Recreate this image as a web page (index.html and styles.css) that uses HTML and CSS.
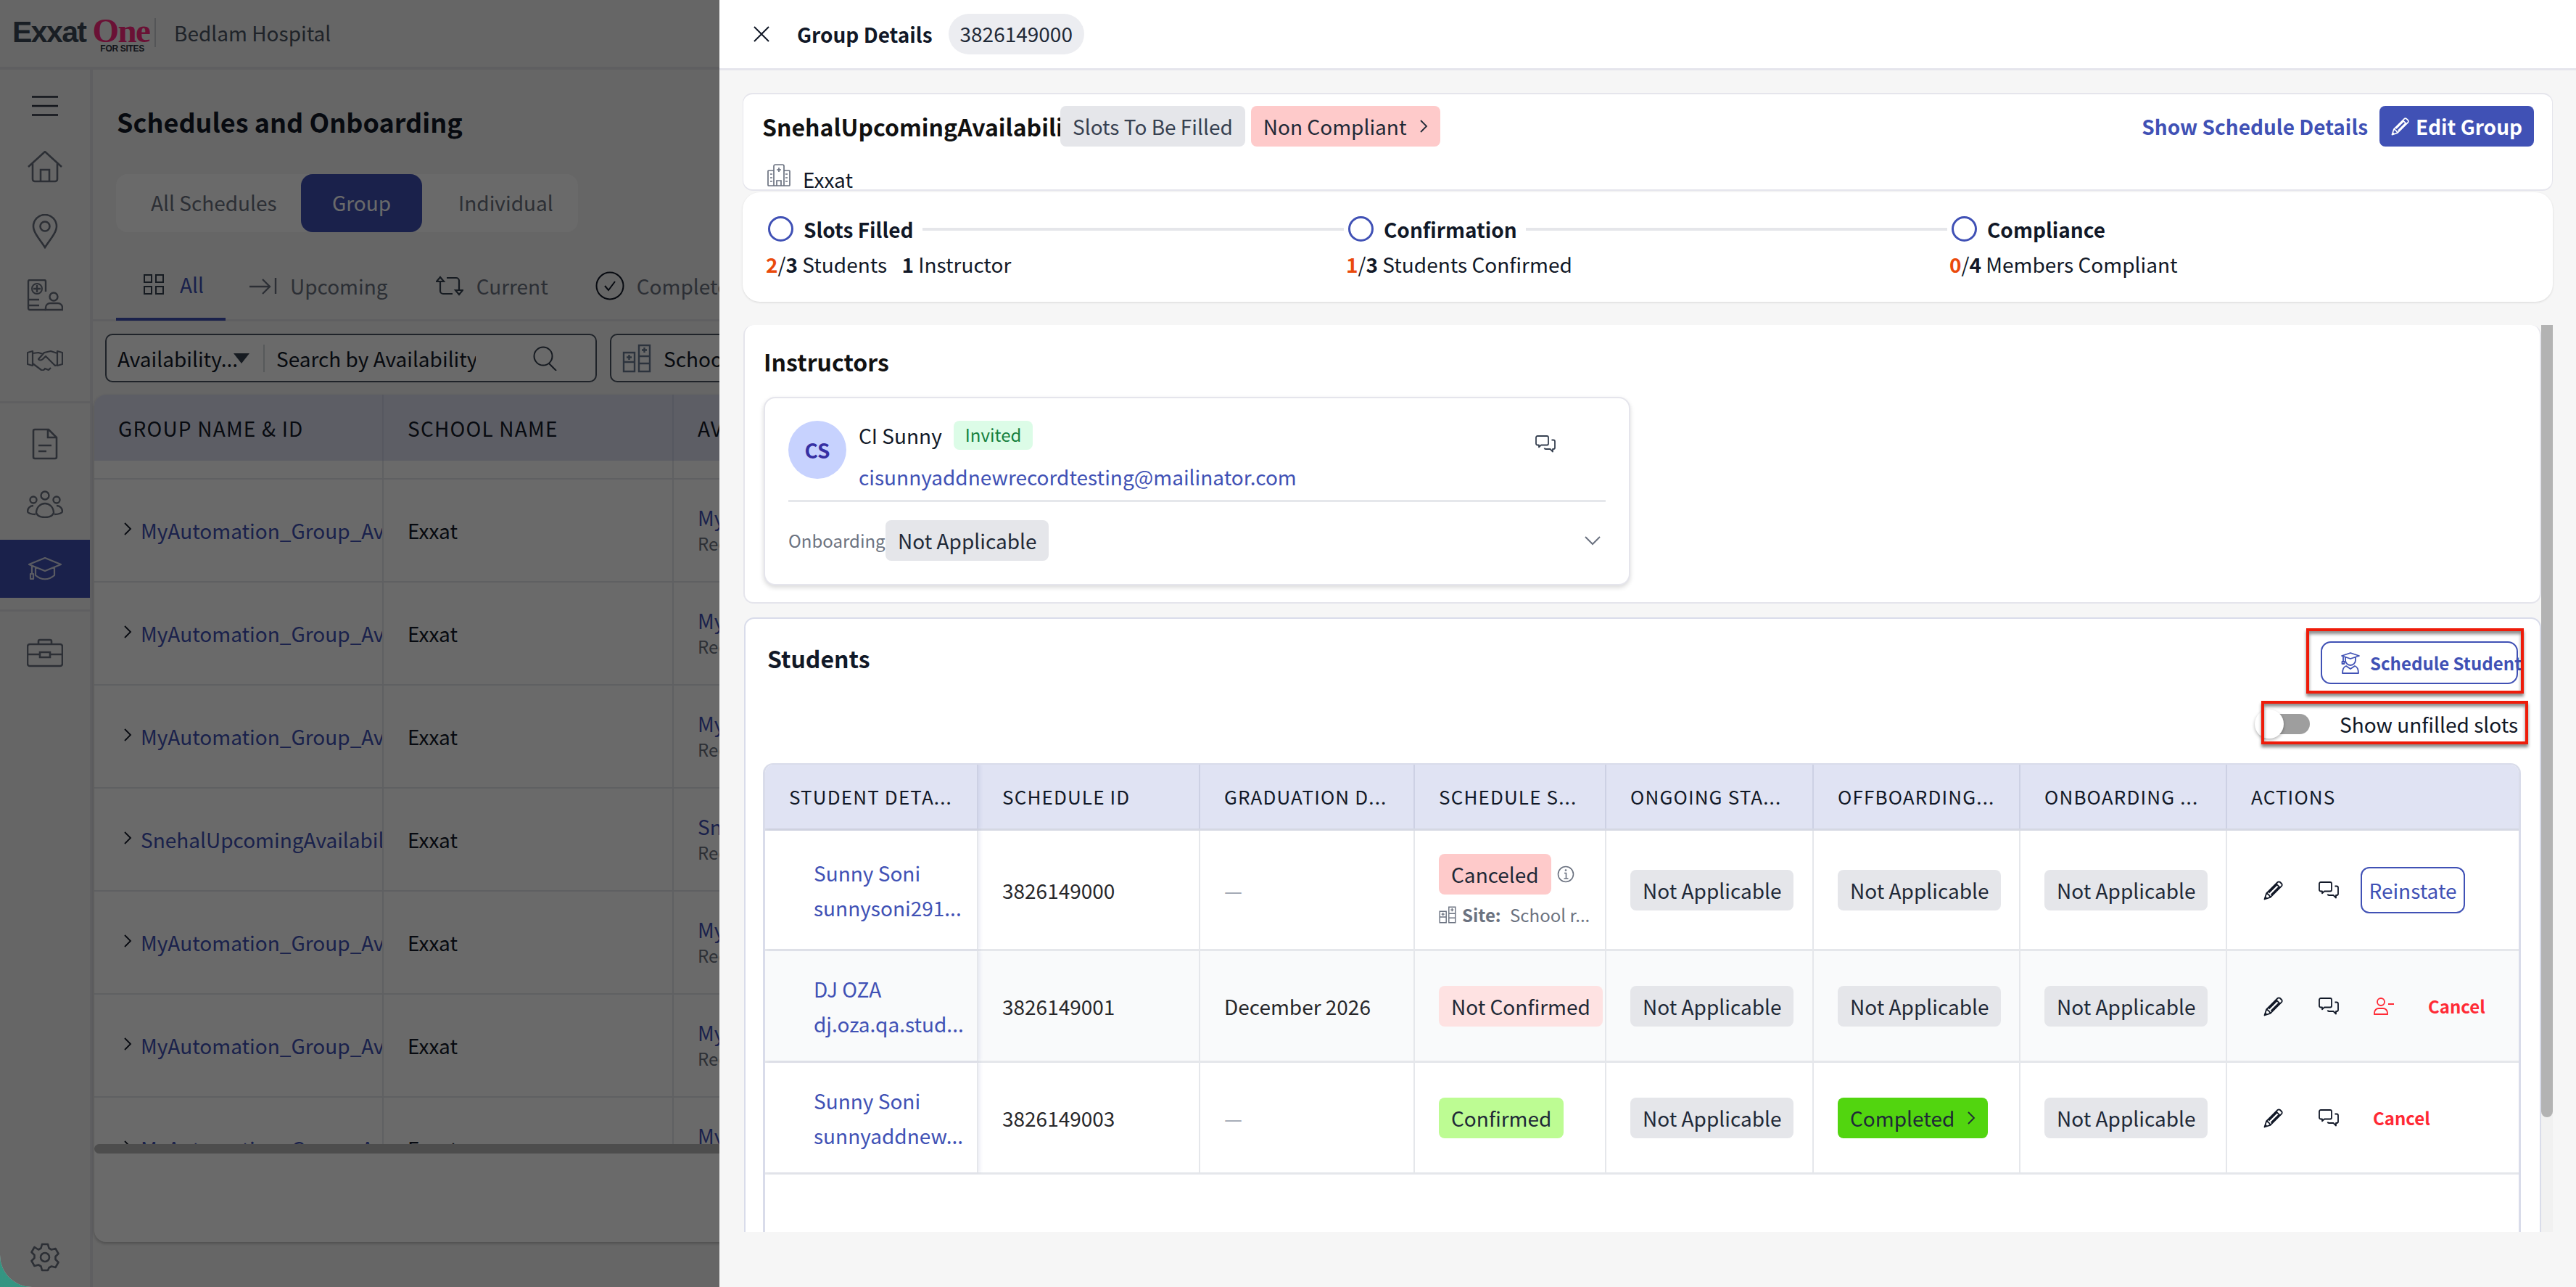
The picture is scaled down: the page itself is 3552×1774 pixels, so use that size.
FILE: index.html
```html
<!DOCTYPE html>
<html lang="en">
<head>
<meta charset="utf-8">
<title>Group Details</title>
<link rel="stylesheet" href="styles.css">
</head>
<body>
<svg class="defs" width="0" height="0" aria-hidden="true">
  <symbol id="i-pencil" viewBox="0 0 28 28"><path d="M1.5 26.5l2.6-8L19.6 3a2.4 2.4 0 013.4 0l2 2a2.4 2.4 0 010 3.4L9.5 23.9z M4.1 18.5c2 .4 4.800 3 5.400 5.400 M17.500 5.200l5.300 5.300 M7.500 17.500l11.500-11.500 M10.500 20.500l11-11" fill="none" stroke="currentColor" stroke-width="1.800" stroke-linejoin="round"/><path d="M1.500 26.500l1.300-4 2.700 2.700z" fill="currentColor"/></symbol>
  <symbol id="i-chat" viewBox="0 0 28 24"><path d="M3 1h13a2 2 0 012 2v8.500a2 2 0 01-2 2H8l-3 2.800v-2.800H3a2 2 0 01-2-2V3a2 2 0 012-2z M22.500 6.500H25a2 2 0 012 2V17a2 2 0 01-2 2h-1v3.500L20.500 19h-6a2 2 0 01-2-1.500" fill="none" stroke="currentColor" stroke-width="1.800" stroke-linejoin="round"/></symbol>
  <symbol id="i-unassign" viewBox="0 0 28 24"><circle cx="10" cy="6" r="5" fill="none" stroke="currentColor" stroke-width="1.800"/><path d="M1 23v-2a6 6 0 016-6h6a6 6 0 016 6v2z M20 9h8" fill="none" stroke="currentColor" stroke-width="1.800"/></symbol>
  <symbol id="i-chev" viewBox="0 0 12 20"><path d="M2 2l8 8-8 8" fill="none" stroke="currentColor" stroke-width="1.800"/></symbol>
  <symbol id="i-school" viewBox="0 0 40 40"><path d="M2 12h15v26H2z M23 2h15v36H23z M2 25h15 M23 17h15 M23 27h15 M9.500 15v7 M6 18.500h7 M30.500 5v7 M27 8.500h7" fill="none" stroke="currentColor" stroke-width="2.400"/></symbol>
  <symbol id="i-hospital" viewBox="0 0 32 32"><path d="M9 30V3a2 2 0 012-2h10a2 2 0 012 2v27 M9 9H2a1 1 0 00-1 1v19a1 1 0 001 1h28a1 1 0 001-1V10a1 1 0 00-1-1h-7 M13 30v-7h6v7 M16 5v6 M13 8h6 M4 14h3 M4 19h3 M4 24h3 M25 14h3 M25 19h3 M25 24h3" fill="none" stroke="currentColor" stroke-width="1.700"/></symbol>
</svg>

<div class="app">
  <div class="page">
    <header class="topbar">
      <div class="logo">
        <span class="logo-exxat">Exxat</span><span class="logo-one">One</span>
        <span class="logo-sites">FOR SITES</span>
      </div>
      <span class="logo-rule"></span>
      <span class="hospital">Bedlam Hospital</span>
    </header>
    <div class="shell">
      <nav class="sidebar">
        <div class="nav-item nav-menu"><svg width="36" height="28" viewBox="0 0 36 28"><path d="M0 1.500h36 M0 14h36 M0 26.500h36" stroke="currentColor" stroke-width="2.400"/></svg></div>
        <div class="nav-item nav-home"><svg width="50" height="44" viewBox="0 0 50 44"><path d="M2 22L25 1l23 21 M8 17v22a3 3 0 003 3h28a3 3 0 003-3V17 M19 42V26h12v16" fill="none" stroke="currentColor" stroke-width="2.600"/></svg></div>
        <div class="nav-item nav-pin"><svg width="36" height="48" viewBox="0 0 36 48"><path d="M18 46C10 34 2 25 2 17a16 16 0 0132 0c0 8-8 17-16 29z" fill="none" stroke="currentColor" stroke-width="2.600"/><circle cx="18" cy="17" r="6.500" fill="none" stroke="currentColor" stroke-width="2.600"/></svg></div>
        <div class="nav-item nav-clin"><svg width="50" height="44" viewBox="0 0 50 44"><path d="M26 42H4a2 2 0 01-2-2V3a2 2 0 012-2h20a2 2 0 012 2v14 M2 28h15 M2 36h15 M14 8v10 M9 13h10" fill="none" stroke="currentColor" stroke-width="2.400"/><circle cx="14" cy="13" r="7" fill="none" stroke="currentColor" stroke-width="2"/><circle cx="37" cy="24" r="5.500" fill="none" stroke="currentColor" stroke-width="2.400"/><path d="M26 42v-3a6 6 0 016-6h11a6 6 0 016 6v3z" fill="none" stroke="currentColor" stroke-width="2.400"/></svg></div>
        <div class="nav-item nav-hand"><svg width="50" height="30" viewBox="0 0 50 30"><path d="M8 3L1 5v16l7 2z M42 3l7 2v16l-7 2z M8 6l8-1 6 2 M42 6l-9-3-9 2-8 9c1 2 4 2 6 0l4-4 13 13 3-1V6 M8 20l12 9c2 1 4 0 5-2l5 2 3-3" fill="none" stroke="currentColor" stroke-width="2.200" stroke-linejoin="round"/></svg></div>
        <div class="nav-sep"></div>
        <div class="nav-item nav-doc"><svg width="36" height="44" viewBox="0 0 36 44"><path d="M2 4a2 2 0 012-2h19l11 11v27a2 2 0 01-2 2H4a2 2 0 01-2-2z M22 2v11h12 M9 24h18 M9 32h11" fill="none" stroke="currentColor" stroke-width="2.600"/></svg></div>
        <div class="nav-item nav-people"><svg width="50" height="38" viewBox="0 0 50 38"><circle cx="25" cy="7" r="5.500" fill="none" stroke="currentColor" stroke-width="2.400"/><circle cx="9" cy="13" r="4.500" fill="none" stroke="currentColor" stroke-width="2.400"/><circle cx="41" cy="13" r="4.500" fill="none" stroke="currentColor" stroke-width="2.400"/><path d="M13 31c0-8 6-13 12-13s12 5 12 13c-3 8-21 8-24 0z M9 21c-5 0-8 4-8 8 0 2 5 4 11 4 M41 21c5 0 8 4 8 8 0 2-5 4-11 4" fill="none" stroke="currentColor" stroke-width="2.400"/></svg></div>
        <div class="nav-item nav-active"><svg width="46" height="32" viewBox="0 0 46 32"><path d="M23 1L1 10l22 9 22-9z M10 14v11c8 7 18 7 26 0V14 M5 12v11 M3 23h4v7H3z" fill="none" stroke="currentColor" stroke-width="2.200" stroke-linejoin="round"/></svg></div>
        <div class="nav-sep nav-sep2"></div>
        <div class="nav-item nav-bag"><svg width="50" height="40" viewBox="0 0 50 40"><path d="M4 8h42a3 3 0 013 3v24a3 3 0 01-3 3H4a3 3 0 01-3-3V11a3 3 0 013-3z M16 8V4a2 2 0 012-2h14a2 2 0 012 2v4 M1 22h17 M32 22h17 M18 19h14v7H18z" fill="none" stroke="currentColor" stroke-width="2.600"/></svg></div>
        <div class="nav-item nav-gear"><svg width="40" height="40" viewBox="0 0 40 40"><path d="M16 2h8l1.500 5.500 3.500 2 5.500-1.500 4 7-4 4v4l4 4-4 7-5.500-1.500-3.500 2L24 38h-8l-1.500-5.500-3.500-2-5.500 1.500-4-7 4-4v-4l-4-4 4-7L11 9.500l3.500-2z" fill="none" stroke="currentColor" stroke-width="2.600" stroke-linejoin="round"/><circle cx="20" cy="20" r="6" fill="none" stroke="currentColor" stroke-width="2.600"/></svg></div>
      </nav>
      <main class="main">
        <h1 class="page-title">Schedules and Onboarding</h1>
        <div class="segments">
          <span class="seg seg-a">All Schedules</span>
          <span class="seg seg-b">Group</span>
          <span class="seg seg-c">Individual</span>
        </div>
        <div class="tabs">
          <div class="tab tab-all"><svg width="28" height="28" viewBox="0 0 28 28"><path d="M1 1h10v10H1z M17 1h10v10H17z M1 17h10v10H1z M17 17h10v10H17z" fill="none" stroke="currentColor" stroke-width="2"/></svg><span>All</span></div>
          <div class="tab tab-up"><svg width="38" height="24" viewBox="0 0 38 24"><path d="M0 13h28 M18 3l10 10-10 10 M36 1v22" fill="none" stroke="currentColor" stroke-width="2.400"/></svg><span>Upcoming</span></div>
          <div class="tab tab-cur"><svg width="38" height="28" viewBox="0 0 38 28"><path d="M6 7v14a4 4 0 004 4h13 M32 21V7a4 4 0 00-4-4H15 M1 8l5-6 5 6z M27 20l5 6 5-6z" fill="none" stroke="currentColor" stroke-width="2.200"/></svg><span>Current</span></div>
          <div class="tab tab-done"><svg width="40" height="40" viewBox="0 0 40 40"><circle cx="20" cy="20" r="18.500" fill="none" stroke="currentColor" stroke-width="2"/><path d="M13 20l5 6 9-12" fill="none" stroke="currentColor" stroke-width="2"/></svg><span>Completed</span></div>
        </div>
        <div class="filters">
          <div class="filter-box">
            <span class="filter-select">Availability...</span>
            <svg class="caret" width="22" height="14" viewBox="0 0 22 14"><path d="M0 0h22L11 14z" fill="currentColor"/></svg>
            <span class="filter-rule"></span>
            <span class="filter-input">Search by Availability Name</span>
            <svg class="search" width="34" height="34" viewBox="0 0 34 34"><circle cx="14" cy="14" r="12.500" fill="none" stroke="currentColor" stroke-width="2"/><path d="M22 24l10 10" stroke="currentColor" stroke-width="2"/></svg>
          </div>
          <div class="filter-school">
            <svg width="40" height="40"><use href="#i-school"/></svg>
            <span>School</span>
          </div>
        </div>
        <section class="grid-card">
          <div class="g-head">
            <div class="g-cell">GROUP NAME &amp; ID</div>
            <div class="g-cell">SCHOOL NAME</div>
            <div class="g-cell">AVAILABILITY</div>
          </div>
          <div class="g-body">
            <div class="g-row g-stub"><div class="g-cell"></div><div class="g-cell"></div><div class="g-cell"></div></div>
            <div class="g-row"><div class="g-cell g-name"><svg width="12" height="20"><use href="#i-chev"/></svg><span>MyAutomation_Group_Availability</span></div><div class="g-cell">Exxat</div><div class="g-cell g-av"><span class="g-link">MyAutomation</span><span class="g-rec">Recurring</span></div></div>
            <div class="g-row"><div class="g-cell g-name"><svg width="12" height="20"><use href="#i-chev"/></svg><span>MyAutomation_Group_Availability</span></div><div class="g-cell">Exxat</div><div class="g-cell g-av"><span class="g-link">MyAutomation</span><span class="g-rec">Recurring</span></div></div>
            <div class="g-row"><div class="g-cell g-name"><svg width="12" height="20"><use href="#i-chev"/></svg><span>MyAutomation_Group_Availability</span></div><div class="g-cell">Exxat</div><div class="g-cell g-av"><span class="g-link">MyAutomation</span><span class="g-rec">Recurring</span></div></div>
            <div class="g-row"><div class="g-cell g-name"><svg width="12" height="20"><use href="#i-chev"/></svg><span>SnehalUpcomingAvailability_Group</span></div><div class="g-cell">Exxat</div><div class="g-cell g-av"><span class="g-link">Snehal</span><span class="g-rec">Recurring</span></div></div>
            <div class="g-row"><div class="g-cell g-name"><svg width="12" height="20"><use href="#i-chev"/></svg><span>MyAutomation_Group_Availability</span></div><div class="g-cell">Exxat</div><div class="g-cell g-av"><span class="g-link">MyAutomation</span><span class="g-rec">Recurring</span></div></div>
            <div class="g-row"><div class="g-cell g-name"><svg width="12" height="20"><use href="#i-chev"/></svg><span>MyAutomation_Group_Availability</span></div><div class="g-cell">Exxat</div><div class="g-cell g-av"><span class="g-link">MyAutomation</span><span class="g-rec">Recurring</span></div></div>
            <div class="g-row"><div class="g-cell g-name"><svg width="12" height="20"><use href="#i-chev"/></svg><span>MyAutomation_Group_Availability</span></div><div class="g-cell">Exxat</div><div class="g-cell g-av"><span class="g-link">MyAutomation</span><span class="g-rec">Recurring</span></div></div>
          </div>
          <div class="g-scroll"></div>
        </section>
      </main>
    </div>
  </div>
  <div class="scrim"></div>

  <aside class="drawer">
    <header class="d-head">
      <svg class="d-close" width="22" height="22" viewBox="0 0 22 22"><path d="M1 1l20 20 M21 1L1 21" stroke="currentColor" stroke-width="2"/></svg>
      <span class="d-title">Group Details</span>
      <span class="d-id">3826149000</span>
    </header>
    <section class="summary">
      <div class="summary-main">
        <div class="summary-left">
          <span class="summary-name">SnehalUpcomingAvailabilit...</span>
          <span class="pill pill-grey pill-slots">Slots To Be Filled</span>
          <span class="pill pill-red">Non Compliant<svg class="pill-chev" width="12" height="20"><use href="#i-chev"/></svg></span>
        </div>
        <div class="summary-right">
          <span class="link-strong">Show Schedule Details</span>
          <span class="btn-primary"><svg width="26" height="26"><use href="#i-pencil"/></svg>Edit Group</span>
        </div>
      </div>
      <div class="summary-site"><svg width="32" height="32"><use href="#i-hospital"/></svg><span>Exxat</span></div>
    </section>
    <section class="steps">
      <div class="step step-a">
        <div class="step-top"><span class="step-dot"></span><span class="step-name">Slots Filled</span><span class="step-line"></span></div>
        <div class="step-sub"><b class="warn">2</b>/<b>3</b> Students <span class="gap"></span><b>1</b> Instructor</div>
      </div>
      <div class="step step-b">
        <div class="step-top"><span class="step-dot"></span><span class="step-name">Confirmation</span><span class="step-line"></span></div>
        <div class="step-sub"><b class="warn">1</b>/<b>3</b> Students Confirmed</div>
      </div>
      <div class="step step-c">
        <div class="step-top"><span class="step-dot"></span><span class="step-name">Compliance</span></div>
        <div class="step-sub"><b class="warn">0</b>/<b>4</b> Members Compliant</div>
      </div>
    </section>

    <div class="scroller">
      <div class="scroll-content">
        <section class="panel-ins">
          <h2 class="h-ins">Instructors</h2>
          <div class="ins-card">
            <div class="ins-top">
              <span class="avatar">CS</span>
              <div class="ins-info">
                <div class="ins-line"><span class="ins-name">CI Sunny</span><span class="invited">Invited</span></div>
                <span class="ins-mail">cisunnyaddnewrecordtesting@mailinator.com</span>
              </div>
              <svg class="ins-chat" width="28" height="24"><use href="#i-chat"/></svg>
            </div>
            <div class="ins-bottom">
              <span class="ob-label">Onboarding:</span>
              <span class="pill pill-grey">Not Applicable</span>
              <svg class="ins-down" width="24" height="14" viewBox="0 0 24 14"><path d="M2 2l10 10L22 2" fill="none" stroke="currentColor" stroke-width="2"/></svg>
            </div>
          </div>
        </section>

        <section class="panel-stu">
          <div class="stu-head">
            <h2 class="h-stu">Students</h2>
            <span class="btn-outline">
              <svg width="26" height="30" viewBox="0 0 26 30"><path d="M13 1L1 5l12 4 12-4z M6 7v4a7 7 0 0014 0V7 M3 6v7 M1.500 13h3v3h-3z M2 29c0-6 2-9 5-10l6 4 6-4c3 1 5 4 5 10z" fill="none" stroke="currentColor" stroke-width="1.800" stroke-linejoin="round"/></svg>
              Schedule Student
            </span>
          </div>
          <div class="stu-toggle">
            <span class="switch"><span class="switch-thumb"></span></span>
            <span class="switch-label">Show unfilled slots</span>
          </div>
          <div class="annot annot-a"></div>
          <div class="annot annot-b"></div>

          <div class="table">
            <div class="t-row t-head">
              <div class="t-cell c-first">STUDENT DETA...</div>
              <div class="t-cell">SCHEDULE ID</div>
              <div class="t-cell">GRADUATION D...</div>
              <div class="t-cell">SCHEDULE S...</div>
              <div class="t-cell">ONGOING STA...</div>
              <div class="t-cell">OFFBOARDING...</div>
              <div class="t-cell">ONBOARDING ...</div>
              <div class="t-cell">ACTIONS</div>
            </div>

            <div class="t-row t-r1">
              <div class="t-cell c-stu c-first"><span>Sunny Soni</span><span>sunnysoni291...</span></div>
              <div class="t-cell">3826149000</div>
              <div class="t-cell dash">—</div>
              <div class="t-cell c-status">
                <div class="status-top"><span class="pill pill-red">Canceled</span>
                  <svg class="info" width="24" height="24" viewBox="0 0 24 24"><circle cx="12" cy="12" r="10.500" fill="none" stroke="currentColor" stroke-width="1.600"/><path d="M10 10.500h2.500V18 M9.500 18h6" fill="none" stroke="currentColor" stroke-width="1.600"/><circle cx="12" cy="6.500" r="1.300" fill="currentColor"/></svg>
                </div>
                <div class="site-line"><svg width="24" height="24"><use href="#i-school"/></svg><b>Site:</b> School r...</div>
              </div>
              <div class="t-cell"><span class="pill pill-grey">Not Applicable</span></div>
              <div class="t-cell"><span class="pill pill-grey">Not Applicable</span></div>
              <div class="t-cell"><span class="pill pill-grey">Not Applicable</span></div>
              <div class="t-cell c-act">
                <svg class="act-pen" width="28" height="28"><use href="#i-pencil"/></svg>
                <svg class="act-chat" width="28" height="24"><use href="#i-chat"/></svg>
                <span class="reinstate">Reinstate</span>
              </div>
            </div>

            <div class="t-row t-r2">
              <div class="t-cell c-stu c-first"><span>DJ OZA</span><span>dj.oza.qa.stud...</span></div>
              <div class="t-cell">3826149001</div>
              <div class="t-cell">December 2026</div>
              <div class="t-cell"><span class="pill pill-rose">Not Confirmed</span></div>
              <div class="t-cell"><span class="pill pill-grey">Not Applicable</span></div>
              <div class="t-cell"><span class="pill pill-grey">Not Applicable</span></div>
              <div class="t-cell"><span class="pill pill-grey">Not Applicable</span></div>
              <div class="t-cell c-act">
                <svg class="act-pen" width="28" height="28"><use href="#i-pencil"/></svg>
                <svg class="act-chat" width="28" height="24"><use href="#i-chat"/></svg>
                <svg class="act-user" width="28" height="24"><use href="#i-unassign"/></svg>
                <span class="cancel">Cancel</span>
              </div>
            </div>

            <div class="t-row t-r3">
              <div class="t-cell c-stu c-first"><span>Sunny Soni</span><span>sunnyaddnew...</span></div>
              <div class="t-cell">3826149003</div>
              <div class="t-cell dash">—</div>
              <div class="t-cell"><span class="pill pill-lime">Confirmed</span></div>
              <div class="t-cell"><span class="pill pill-grey">Not Applicable</span></div>
              <div class="t-cell"><span class="pill pill-green">Completed<svg class="pill-chev" width="12" height="20"><use href="#i-chev"/></svg></span></div>
              <div class="t-cell"><span class="pill pill-grey">Not Applicable</span></div>
              <div class="t-cell c-act">
                <svg class="act-pen" width="28" height="28"><use href="#i-pencil"/></svg>
                <svg class="act-chat" width="28" height="24"><use href="#i-chat"/></svg>
                <span class="cancel">Cancel</span>
              </div>
            </div>
          </div>
        </section>
      </div>
      <div class="scroll-track"><div class="scroll-thumb"></div></div>
    </div>
  </aside>
</div>
</body>
</html>
```

FILE: styles.css
```css
* { box-sizing: border-box; }
html, body { margin: 0; padding: 0; }
body {
  width: 3552px;
  height: 1774px;
  overflow: hidden;
  background: linear-gradient(135deg, #2f8f7d, #3fa28c);
  font-family: "Noto Sans CJK SC", "Liberation Sans", sans-serif;
  font-size: 28px;
  line-height: 40px;
  color: #111827;
}
.defs { position: absolute; }
svg { display: block; flex: none; }
h1, h2 { margin: 0; }

.app {
  position: relative;
  width: 3552px;
  height: 1774px;
  overflow: hidden;
  border-bottom-left-radius: 44px;
}
.page { width: 3552px; height: 1774px; background: #f6f6f6; display: flex; flex-direction: column; }
.scrim { position: absolute; inset: 0; background: rgba(0, 0, 0, 0.585); }

/* top bar */
.topbar {
  height: 96px;
  flex: none;
  display: flex;
  align-items: center;
  padding-left: 17px;
  border-bottom: 4px solid #e4e4ea;
}
.logo { position: relative; width: 182px; height: 64px; display: flex; align-items: baseline; white-space: nowrap; }
.logo-exxat { font-family: "Liberation Sans", sans-serif; font-weight: 700; font-size: 41px; line-height: 56px; letter-spacing: -1.600px; color: #3c4a58; }
.logo-one { font-family: "Liberation Serif", serif; font-weight: 700; font-size: 47px; line-height: 56px; letter-spacing: -1.500px; margin-left: 9px; color: #ff2a80; }
.logo-sites { position: absolute; right: 0; top: 46px; font-family: "Liberation Sans", sans-serif; font-size: 12px; line-height: 14px; font-weight: 700; letter-spacing: -0.300px; color: #2e3642; }
.logo-rule { width: 2px; height: 40px; margin-left: 14px; margin-top: -2px; background: #c9ccd2; }
.hospital { margin-left: 25px; margin-top: -2px; color: #4b5563; }

.shell { flex: 1; display: flex; min-height: 0; }

/* sidebar */
.sidebar {
  width: 128px;
  flex: none;
  border-right: 4px solid #e4e4ea;
  display: flex;
  flex-direction: column;
  color: #6b7280;
}
.nav-item { width: 124px; display: flex; justify-content: center; align-items: center; }
.nav-menu { height: 59px; margin-top: 20px; color: #2b3240; }
.nav-home { height: 44px; margin-top: 33px; }
.nav-pin { height: 48px; margin-top: 43px; }
.nav-clin { height: 44px; margin-top: 42px; }
.nav-hand { height: 30px; margin-top: 52px; }
.nav-sep { width: 124px; height: 3px; background: #e4e4ea; margin-top: 42px; }
.nav-doc { height: 44px; margin-top: 34px; }
.nav-people { height: 38px; margin-top: 42px; }
.nav-active { height: 80px; margin-top: 30px; background: #4051b5; color: #d9dcec; }
.nav-sep2 { margin-top: 16px; }
.nav-bag { height: 40px; margin-top: 37px; }
.nav-gear { height: 40px; margin-top: auto; margin-bottom: 21px; }

/* main */
.main { flex: 1; min-width: 0; display: flex; flex-direction: column; }
.page-title { height: 144px; flex: none; padding-left: 33px; font-size: 36px; line-height: 142px; font-weight: 600; }
.segments {
  width: 637px;
  height: 80px;
  flex: none;
  margin-left: 32px;
  border-radius: 16px;
  background: #fff;
  display: flex;
  align-items: center;
  color: #6b7280;
}
.seg { height: 80px; line-height: 78px; }
.seg-a { padding-left: 48px; width: 255px; }
.seg-b { width: 167px; text-align: center; background: #4051b5; border-radius: 16px; color: #fff; }
.seg-c { padding-left: 50px; }

.tabs { height: 123px; flex: none; display: flex; border-bottom: 3px solid #e4e4ea; color: #6b7280; }
.tab { display: flex; align-items: center; height: 120px; padding-top: 28px; white-space: nowrap; }
.tab svg { margin-right: 18px; }
.tab-all { width: 151px; margin-left: 32px; padding-left: 38px; color: #4051b5; border-bottom: 4px solid #4051b5; height: 122px; padding-top: 26px; }
.tab-all svg { color: #374151; margin-right: 22px; }
.tab-up { margin-left: 33px; }
.tab-cur { margin-left: 66px; }
.tab-cur svg { color: #374151; }
.tab-done { margin-left: 65px; }
.tab-done svg { color: #111827; margin-right: 17px; }

.filters { height: 67px; flex: none; margin-top: 17px; margin-left: 17px; display: flex; gap: 18px; }
.filter-box {
  width: 678px;
  border: 2px solid #4b5563;
  border-radius: 10px;
  background: #fff;
  display: flex;
  align-items: center;
  padding-left: 15px;
}
.filter-select { width: 160px; white-space: nowrap; }
.caret { color: #374151; margin-right: 19px; }
.filter-rule { width: 2px; height: 38px; background: #d1d5db; }
.filter-input { width: 275px; margin-left: 16px; overflow: hidden; white-space: nowrap; }
.search { margin-left: 79px; color: #374151; }
.filter-school {
  width: 400px;
  border: 2px solid #4b5563;
  border-radius: 10px;
  background: #fff;
  display: flex;
  align-items: center;
  padding-left: 15px;
  gap: 17px;
  color: #111827;
}
.filter-school svg { color: #6b7c93; }

.grid-card {
  flex: none;
  margin-top: 17px;
  margin-left: 2px;
  height: 1168px;
  width: 1400px;
  background: #fff;
  border-radius: 16px;
  box-shadow: 0 2px 4px rgba(0, 0, 0, 0.25);
  display: flex;
  flex-direction: column;
}
.g-head {
  height: 91px;
  flex: none;
  background: #e0e3f3;
  border-radius: 16px 0 0 0;
  display: grid;
  grid-template-columns: 399px 400px 1fr;
  letter-spacing: 1.200px;
}
.g-head .g-cell { height: 91px; display: flex; align-items: center; padding-left: 33px; border-right: 2px solid #d0d3e6; }
.g-body { height: 942px; flex: none; overflow: hidden; }
.g-row { height: 142px; display: grid; grid-template-columns: 399px 400px 1fr; border-bottom: 2px solid #e5e7eb; }
.g-stub { height: 26px; }
.g-row .g-cell { display: flex; align-items: center; padding-left: 33px; border-right: 2px solid #e5e7eb; overflow: hidden; white-space: nowrap; }
.g-row .g-name { padding-left: 40px; padding-right: 0; gap: 12px; color: #4051b5; }
.g-name svg { color: #111827; margin-top: -4px; }
.g-row .g-av { flex-direction: column; align-items: flex-start; justify-content: center; }
.g-link { color: #4051b5; line-height: 36px; }
.g-rec { color: #6b7280; font-size: 24px; line-height: 36px; }
.g-scroll { height: 13px; flex: none; margin-top: 0; background: #b9b9b9; border-radius: 7px 0 0 7px; }

/* drawer */
.drawer {
  position: absolute;
  left: 992px;
  top: 0;
  width: 2560px;
  height: 1774px;
  background: #f6f6f6;
  display: flex;
  flex-direction: column;
  padding: 0 32px 0 32px;
}
.d-head {
  height: 97px;
  flex: none;
  margin: 0 -32px;
  padding-left: 47px;
  background: #fff;
  border-bottom: 3px solid #e5e5ec;
  display: flex;
  align-items: center;
}
.d-close { color: #111827; margin-top: 0; }
.d-title { margin-left: 38px; font-weight: 600; }
.d-id { margin-left: 22px; height: 56px; padding: 0 16px; line-height: 54px; border-radius: 28px; background: #ecedf1; color: #1f2937; }

.summary {
  height: 135px;
  flex: none;
  margin-top: 31px;
  background: #fff;
  border-radius: 14px;
  border-top: 2px solid #e5e5ec;
  border-bottom: 2px solid #e5e5ec;
  border-right: 1px solid #e5e5ec;
  border-left: 1px solid #e5e5ec;
  overflow: hidden;
}
.summary-main { display: flex; justify-content: space-between; padding: 16px 25px 0 26px; }
.summary-left { display: flex; align-items: center; }
.summary-name { font-size: 32px; font-weight: 600; color: #111; width: 411px; white-space: nowrap; }
.pill {
  display: inline-flex;
  align-items: center;
  height: 56px;
  padding: 0 17px;
  border-radius: 8px;
  white-space: nowrap;
  line-height: 54px;
  color: #1f2937;
}
.pill-grey { background: #e5e6ea; }
.pill-red { background: #fecaca; }
.pill-rose { background: #fee2e2; }
.pill-lime { background: #bdfc93; }
.pill-green { background: #52d50f; }
.pill-slots { margin-right: 8px; color: #374151; }
.pill-chev { margin-left: 17px; }
.summary-right { display: flex; align-items: center; gap: 16px; }
.link-strong { color: #4051b5; font-weight: 600; }
.btn-primary {
  height: 56px;
  padding: 0 16px;
  display: flex;
  align-items: center;
  gap: 8px;
  border-radius: 8px;
  background: #4051b5;
  color: #fff;
  font-weight: 600;
}
.summary-site { display: flex; align-items: center; gap: 17px; margin-top: 15px; padding-left: 33px; line-height: 40px; }
.summary-site svg { color: #6b7280; }
.summary-site span { margin-top: 10px; }

.steps {
  height: 151px;
  flex: none;
  margin-top: 2px;
  padding: 33px 0 0 32px;
  background: #fff;
  border-radius: 24px;
  box-shadow: 0 1px 3px rgba(0, 0, 0, 0.12);
  display: grid;
  grid-template-columns: 800px 832px 1fr;
}
.step-top { display: flex; align-items: center; height: 35px; padding-left: 3px; }
.step-dot { width: 35px; height: 35px; border-radius: 50%; border: 3px solid #4051b5; flex: none; }
.step-name { margin-left: 14px; font-weight: 600; white-space: nowrap; }
.step-line { flex: 1; height: 4px; margin: 0 3px 0 12px; background: #e5e6ea; }
.step-sub { margin-top: 11px; white-space: nowrap; }
.step-sub b { font-weight: 600; }
.warn { color: #ea4a0c; }
.gap { display: inline-block; width: 14px; }

/* scroll area */
.scroller { height: 1250px; flex: none; margin-top: 32px; display: flex; overflow: hidden; }
.scroll-content { width: 2480px; flex: none; overflow: hidden; }
.scroll-track { width: 16px; flex: none; background: #f1f1f1; margin-left: 0; }
.scroll-thumb { height: 1092px; background: #b3b3b3; border-radius: 0 0 8px 8px; }

.panel-ins {
  height: 384px;
  margin-left: 1px;
  padding: 30px 0 0 26px;
  background: #fff;
  border-radius: 14px;
  border: 2px solid #e5e5ec;
  border-top: 0;
}
.h-ins { font-size: 32px; line-height: 40px; font-weight: 600; color: #111; }
.ins-card {
  width: 1195px;
  height: 260px;
  margin-top: 29px;
  padding: 31px 32px 0;
  background: #fff;
  border: 2px solid #e5e5ec;
  border-radius: 16px;
  box-shadow: 0 3px 6px rgba(0, 0, 0, 0.15);
}
.ins-top { display: flex; height: 112px; border-bottom: 3px solid #e5e7eb; }
.avatar { width: 80px; height: 80px; border-radius: 50%; background: #c7d2fe; color: #3730a3; font-weight: 600; display: flex; align-items: center; justify-content: center; }
.ins-info { margin-left: 17px; display: flex; flex-direction: column; width: 1000px; }
.ins-line { display: flex; align-items: center; height: 40px; }
.invited { margin-left: 16px; height: 40px; padding: 0 16px; border-radius: 8px; background: #dcfce7; color: #15803d; font-size: 24px; line-height: 38px; }
.ins-mail { margin-top: 17px; color: #4051b5; white-space: nowrap; }
.ins-chat { margin-left: 0; margin-top: 20px; color: #374151; margin-left: -67px; }
.ins-bottom { display: flex; align-items: center; margin-top: 25px; height: 56px; }
.ob-label { color: #6b7280; font-size: 24px; width: 134px; white-space: nowrap; }
.ins-down { margin-left: auto; margin-right: 6px; color: #6b7280; }

.panel-stu {
  position: relative;
  margin-top: 19px;
  margin-left: 2px;
  height: 1000px;
  padding: 31px 24px 0;
  background: #fff;
  border: 2px solid #d9dcea;
  border-radius: 14px;
}
.stu-head { display: flex; justify-content: space-between; align-items: center; height: 59px; padding: 0 6px; }
.h-stu { font-size: 32px; font-weight: 600; color: #111827; line-height: 40px; margin-top: -14px; }
.btn-outline {
  width: 272px;
  height: 59px;
  display: flex;
  align-items: center;
  padding-left: 26px;
  gap: 14px;
  border: 2px solid #4051b5;
  border-radius: 14px;
  color: #4051b5;
  font-size: 24px;
  font-weight: 600;
  white-space: nowrap;
}
.stu-toggle { display: flex; align-items: center; justify-content: flex-end; height: 40px; margin-top: 35px; padding-right: 6px; }
.switch { position: relative; width: 74px; height: 28px; margin-right: 41px; border-radius: 14px; background: #9e9e9e; }
.switch-thumb { position: absolute; left: -2px; top: -6px; width: 40px; height: 40px; border-radius: 50%; background: #fff; box-shadow: 0 2px 4px rgba(0, 0, 0, 0.3); }
.annot {
  position: absolute;
  border: 4px solid #ee1c0a;
  box-shadow: 0 4px 4px rgba(0, 0, 0, 0.45), inset 0 4px 4px rgba(0, 0, 0, 0.45);
  pointer-events: none;
}
.annot-a { left: 2152px; top: 13px; width: 300px; height: 90px; }
.annot-b { left: 2090px; top: 113px; width: 368px; height: 60px; }

/* students table */
.table {
  margin-top: 34px;
  width: 2424px;
  height: 760px;
  border: solid #d9dcea;
  border-width: 2px 3px 0;
  border-radius: 14px 14px 0 0;
  overflow: hidden;
}
.t-row {
  display: grid;
  grid-template-columns: 294px 306px 296px 264px 286px 285px 285px 402px;
  border-bottom: 3px solid #e5e7eb;
}
.t-cell {
  display: flex;
  align-items: center;
  padding-left: 33px;
  border-right: 2px solid #e5e7eb;
  white-space: nowrap;
  color: #27272a;
}
.t-cell:last-child { border-right: 0; }
.t-head { height: 91px; background: #e0e3f3; border-bottom-color: #d5d8e3; }
.t-head .t-cell { border-right-color: #cdd1e4; letter-spacing: 1.150px; color: #111827; font-size: 26px; }
.t-r1 { height: 166px; }
.t-r2 { height: 154px; background: #f9fafb; }
.t-r3 { height: 154px; }
.c-first { box-shadow: 3px 0 4px rgba(120, 130, 190, 0.12); }
.c-stu { flex-direction: column; align-items: flex-start; justify-content: center; padding-left: 67px; color: #4051b5; line-height: 48px; }
.dash { color: #9ca3af; }
.c-status { flex-direction: column; align-items: flex-start; justify-content: center; }
.status-top { display: flex; align-items: center; gap: 8px; }
.info { color: #6b7280; }
.site-line { display: flex; align-items: center; height: 30px; margin-top: 13px; font-size: 24px; color: #6b7280; gap: 8px; white-space: pre; }
.site-line b { font-weight: 600; margin-right: -1px; }
.c-act { padding-left: 0; }
.act-pen { margin-left: 50px; color: #111827; }
.act-chat { margin-left: 48px; color: #111827; }
.act-user { margin-left: 48px; color: #ff2a35; }
.reinstate {
  margin-left: 30px;
  width: 144px;
  height: 64px;
  line-height: 60px;
  text-align: center;
  border: 2px solid #4051b5;
  border-radius: 12px;
  color: #4051b5;
}
.cancel { margin-left: 47px; color: #ff2a35; font-size: 24px; font-weight: 600; }
```
